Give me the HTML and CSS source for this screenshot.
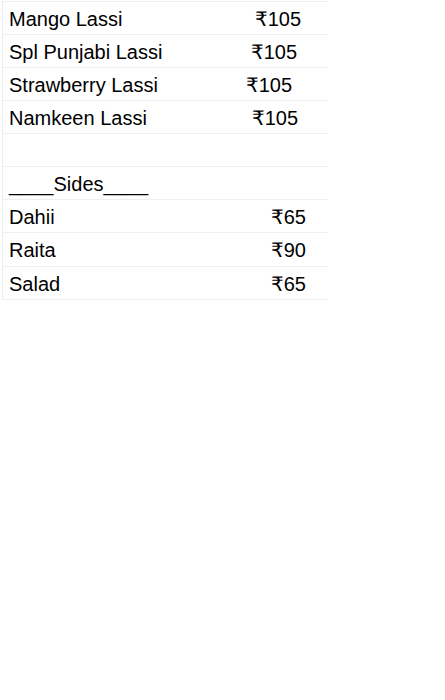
FILE: index.html
```html
<!DOCTYPE html>
<html>
<head>
<meta charset="utf-8">
<link rel="stylesheet" href="styles.css">
</head>
<body>
<div class="menu">
  <div class="row"><span class="name">Mango Lassi</span><span class="price p26">₹105</span></div>
  <div class="row"><span class="name">Spl Punjabi Lassi</span><span class="price p30">₹105</span></div>
  <div class="row"><span class="name">Strawberry Lassi</span><span class="price p35">₹105</span></div>
  <div class="row"><span class="name">Namkeen Lassi</span><span class="price p29">₹105</span></div>
  <div class="row"><span class="name"></span><span class="price"></span></div>
  <div class="row"><span class="name">____Sides____</span><span class="price"></span></div>
  <div class="row"><span class="name">Dahii</span><span class="price p21">₹65</span></div>
  <div class="row tall"><span class="name">Raita</span><span class="price p21">₹90</span></div>
  <div class="row"><span class="name">Salad</span><span class="price p21">₹65</span></div>
</div>
</body>
</html>
```
FILE: styles.css
```css
html, body {
  margin: 0;
  padding: 0;
  background: #fff;
}
body {
  font-family: "Liberation Sans", Arial, "DejaVu Sans", sans-serif;
  font-size: 20px;
  line-height: 24px;
  color: #000;
}
.menu {
  margin: 1px 0 0 2px;
  width: 324px;
  border-left: 1px solid #ececec;
}
.row {
  display: flex;
  justify-content: space-between;
  align-items: center;
  height: 31px;
  padding-top: 1px;
  border-top: 1px solid #efefef;
}
.row.tall {
  height: 32px;
}
.row:last-child {
  border-bottom: 1px solid #efefef;
}
.name {
  padding-left: 6px;
  white-space: pre;
}
.price {
  text-align: right;
}
.p21 { padding-right: 21px; }
.p26 { padding-right: 26px; }
.p29 { padding-right: 29px; }
.p30 { padding-right: 30px; }
.p35 { padding-right: 35px; }
```
